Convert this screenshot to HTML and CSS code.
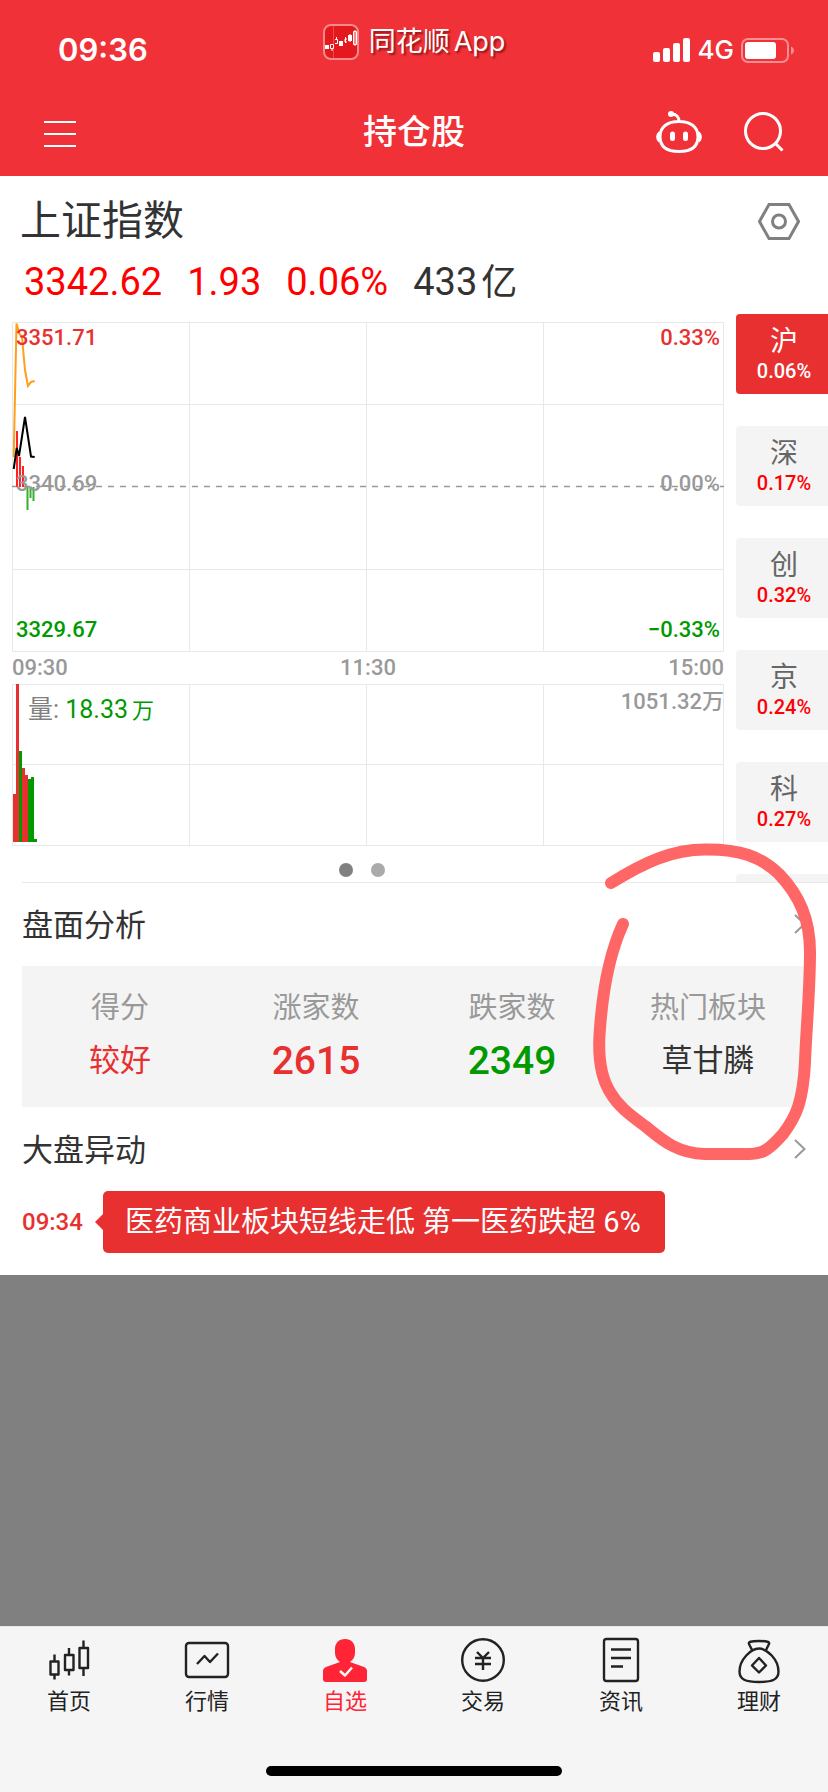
FILE: index.html
```html
<!DOCTYPE html>
<html lang="zh-CN">
  <head>
    <meta charset="UTF-8" />
    <meta name="viewport" content="width=device-width, initial-scale=1.0" />
    <title>持仓股</title>
    <link rel="stylesheet" href="styles.css">
  </head>
  <body>
    <header class="header">
      <div class="status-bar">
        <span class="time">09:36</span>
        <div class="brand">
          <svg class="brand-logo" width="36" height="36" viewBox="0 0 36 36">
            <rect x="1" y="1" width="34" height="34" rx="7" fill="#e4191e" stroke="#f58a8d" stroke-width="2" />
            <path d="M10.500 2v32" stroke="#ee4a4d" />
            <path d="M2 21h4v4H2zM16 17h4v5h-4zM25 11h4v6h-4z" fill="#fff" />
            <path d="M7.500 20.500h3v4h-3zM9 24v3M12 15.500h2.500v4H12M13.500 13v2M24 15h-2v3h2M22.500 13v6M27 10v8M30.500 7.500h3v13h-3zM32 6v16" fill="none" stroke="#fff" />
          </svg>
          <span class="brand-name">同花顺<span>App</span></span>
        </div>
        <div class="signals">
          <svg width="38" height="24" viewBox="0 0 38 24" fill="#fff">
            <rect x="0" y="14" width="7" height="10" rx="2" />
            <rect x="10" y="10" width="7" height="14" rx="2" />
            <rect x="20" y="5" width="7" height="19" rx="2" />
            <rect x="30" y="0" width="7" height="24" rx="2" />
          </svg>
          <span class="network">4G</span>
          <svg width="53" height="25" viewBox="0 0 53 25">
            <rect x="1" y="1" width="46" height="23" rx="6" fill="none" stroke="#f78e91" stroke-width="2" />
            <rect x="4" y="4" width="31" height="17" rx="3" fill="#fff" />
            <path d="M50 8.500c4 1.500 4 6.500 0 8z" fill="#f78e91" />
          </svg>
        </div>
      </div>
      <div class="title-bar">
        <button class="icon-btn" aria-label="菜单">
          <svg width="32" height="30" viewBox="0 0 32 30" fill="#fff">
            <path d="M0 4h32v2H0zM0 16h32v2H0zM0 28h32v2H0z" />
          </svg>
        </button>
        <h1>持仓股</h1>
        <div class="title-actions">
          <button class="icon-btn" aria-label="助手">
            <svg width="46" height="42" viewBox="0 0 46 42" fill="none" stroke="#fff" stroke-width="3">
              <path d="M23 10.500c11 0 19 5 19 15 0 9-5 15-19 15s-19-6-19-15c0-10 8-15 19-15zM23 10c0-4-3-7-7-7" />
              <circle cx="15" cy="3" r="3" fill="#fff" stroke="none" />
              <path d="M3 21c-3 1-3 9 0 10zM43 21c3 1 3 9 0 10z" fill="#fff" stroke-width="1" />
              <path d="M16.500 23v4.500M29.500 23v4.500" stroke-width="5" stroke-linecap="round" />
            </svg>
          </button>
          <button class="icon-btn" aria-label="搜索">
            <svg width="40" height="40" viewBox="0 0 40 40" fill="none" stroke="#fff" stroke-width="3">
              <circle cx="19" cy="19" r="17.500" />
              <path d="M31.500 31.500l7 7" />
            </svg>
          </button>
        </div>
      </div>
    </header>

    <main class="content">
      <section class="index">
        <div class="index-head">
          <h2>上证指数</h2>
          <button class="icon-btn" aria-label="设置">
            <svg width="42" height="37" viewBox="0 0 42 37" fill="none" stroke="#808080" stroke-width="3">
              <path d="M11 1.500h20l9.500 17-9.500 17H11l-9.500-17z" />
              <circle cx="21" cy="18.500" r="6.500" />
            </svg>
          </button>
        </div>
        <div class="quote">
          <span>3342.62</span>
          <span>1.93</span>
          <span>0.06%</span>
          <span class="amount">433<small>亿</small></span>
        </div>
      </section>

      <section class="market">
        <div class="charts">
          <div class="chart price">
            <svg viewBox="0 0 712 330" preserveAspectRatio="none">
              <path class="grid-line" d="M.5 .5h711v329H.5zM177.500 0v330M354.500 0v330M531.500 0v330M0 82.500h712M0 247.500h712" />
              <path d="M0 164.500h712" stroke="#999" stroke-width="1.500" stroke-dasharray="6 6" />
              <path d="M5 109v56M8 135v30M11 144v21" stroke="#f22" stroke-width="2" />
              <path d="M15.500 165v23M18.500 165v11M21.500 165v14" stroke="#35b02d" stroke-width="2" />
              <polyline points="1.700,135 4.500,1.500 7.500,12 10,15 13,48 16,64 19,60 22.700,59" fill="none" stroke="#ff9f1a" stroke-width="2" />
              <polyline points="1.700,147 4.700,126 7,134 13,95 19,134.500 22.700,135" fill="none" stroke="#000" stroke-width="2" />
            </svg>
            <div class="scale">
              <div class="scale-row up"><span>3351.71</span><span>0.33%</span></div>
              <div class="scale-row flat"><span>3340.69</span><span>0.00%</span></div>
              <div class="scale-row down"><span>3329.67</span><span>−0.33%</span></div>
            </div>
          </div>
          <div class="axis">
            <span>09:30</span>
            <span>11:30</span>
            <span>15:00</span>
          </div>
          <div class="chart volume">
            <svg viewBox="0 0 712 162" preserveAspectRatio="none">
              <path class="grid-line" d="M.5 .5h711v161H.5zM177.500 0v162M354.500 0v162M531.500 0v162M0 80.500h712" />
              <path d="M1 110h3v48H1zM4 0h3v158H4zM10 84h3v74h-3zM13 91h3v67h-3z" fill="#e83030" />
              <path d="M7 67h3v91H7zM16 95h3v63h-3zM19 93h3v65h-3zM22 155h3v3h-3z" fill="#090" />
            </svg>
            <div class="volume-labels">
              <span class="volume-now">量: <b>18.33<small>万</small></b></span>
              <span class="volume-max">1051.32万</span>
            </div>
          </div>
          <div class="dots">
            <span class="dot active"></span>
            <span class="dot"></span>
          </div>
        </div>
        <div class="tabs">
          <button class="tab active">沪<span>0.06%</span></button>
          <button class="tab">深<span>0.17%</span></button>
          <button class="tab">创<span>0.32%</span></button>
          <button class="tab">京<span>0.24%</span></button>
          <button class="tab">科<span>0.27%</span></button>
          <button class="tab" aria-label="更多"></button>
        </div>
      </section>

      <section class="analysis">
        <a class="section-title" href="#">
          <span>盘面分析</span>
          <svg width="12" height="20" viewBox="0 0 12 20"><path d="M1 1l9.500 9L1 19" /></svg>
        </a>
        <div class="summary">
          <div class="cell"><p>得分</p><strong class="up">较好</strong></div>
          <div class="cell"><p>涨家数</p><strong class="num up">2615</strong></div>
          <div class="cell"><p>跌家数</p><strong class="num down">2349</strong></div>
          <div class="cell"><p>热门板块</p><strong>草甘膦</strong></div>
        </div>
        <a class="section-title" href="#">
          <span>大盘异动</span>
          <svg width="12" height="20" viewBox="0 0 12 20"><path d="M1 1l9.500 9L1 19" /></svg>
        </a>
        <div class="event">
          <time>09:34</time>
          <a class="bubble" href="#">医药商业板块短线走低 第一医药跌超 6%</a>
        </div>
      </section>

      <!-- hand-drawn mark around the hot sector cell -->
      <svg class="mark" width="228" height="330" viewBox="600 840 228 330">
        <path d="M611 883C643 863 672 849 707 849.500C740 849.500 760 856 779 874C800 896 810 920 810 952C810 992 806 1032 805 1062C803 1102 796 1117 783 1134C769 1150 762 1154 750 1154H705C675 1153 660 1138 645 1126C629 1114 618 1106 610 1092C599 1074 598 1050 600 1028C603 988 610 952 623 924" />
      </svg>
    </main>

    <nav class="tab-bar">
      <div class="tab-items">
        <a class="tab-item" href="#">
          <svg width="48" height="48" viewBox="0 0 48 48">
            <path d="M5.500 25.500h8v13h-8zM9.500 18.500v7M9.500 38.500v5M20 19h8.500v15H20zM24 12v7M24 34v5.500M34.500 12H43v20h-8.500zM38.500 4.500V12M38.500 32v8" />
          </svg>
          首页
        </a>
        <a class="tab-item" href="#">
          <svg width="48" height="48" viewBox="0 0 48 48">
            <rect x="3" y="7" width="42" height="34" rx="3" />
            <path d="M14 28l7.500-8 5.500 6 8-8.500" />
          </svg>
          行情
        </a>
        <a class="tab-item active" href="#">
          <svg width="48" height="48" viewBox="0 0 48 48">
            <path d="M24 3c6 0 10 4 10 10v4c0 4-2 7-5 9l14 5c2 1 3 2 3 4v8c0 2-1 3-3 3H5c-2 0-3-1-3-3v-8c0-2 1-3 3-4l14-5c-3-2-5-5-5-9v-4c0-6 4-10 10-10z" fill="#ff2436" stroke="none" />
            <path d="M19 35l5 4.500 7-8" stroke="#fff" />
          </svg>
          自选
        </a>
        <a class="tab-item" href="#">
          <svg width="48" height="48" viewBox="0 0 48 48">
            <circle cx="24" cy="24" r="20.800" />
            <path d="M18 16l6 6 6-6M24 22v12M16 22h16M16 28h16" />
          </svg>
          交易
        </a>
        <a class="tab-item" href="#">
          <svg width="48" height="48" viewBox="0 0 48 48">
            <rect x="7" y="3" width="34" height="42" rx="2.500" />
            <path d="M14 13.500h20M14 22h20M14 30.500h12" />
          </svg>
          资讯
        </a>
        <a class="tab-item" href="#">
          <svg width="48" height="48" viewBox="0 0 48 48">
            <path d="M17 14l-3-6c-1-2 2-3 10-3s11 1 10 3l-3 6M24 12.500c8 0 19.500 11 19.500 23 0 8-6 10.500-19.500 10.500S4.500 43.500 4.500 35.500c0-12 11.500-23 19.500-23zM24 22l7 7.500-7 7-7-7z" />
          </svg>
          理财
        </a>
      </div>
      <div class="home-indicator"></div>
    </nav>
  </body>
</html>
```

FILE: styles.css
```css
* {
  box-sizing: border-box;
}

body {
  margin: 0;
  min-height: 100vh;
  display: flex;
  flex-direction: column;
  background-color: #808080;
  color: #333;
  font-family: Roboto, "Noto Sans CJK SC", sans-serif;
  overflow-x: hidden;
}

h1,
h2,
p {
  margin: 0;
  font-weight: 400;
}

a {
  color: inherit;
  text-decoration: none;
}

button {
  border: none;
  background: none;
  padding: 0;
  font-family: inherit;
  cursor: pointer;
}

svg {
  display: block;
}

.icon-btn {
  display: block;
}

.up {
  color: #e83030;
}

.down {
  color: #090;
}

.flat {
  color: #999;
}

/* Header */
.header {
  background-color: #f03238;
  color: #fff;
}

.status-bar,
.title-bar {
  display: grid;
  grid-template-columns: 1fr auto 1fr;
  align-items: center;
  height: 88px;
}

.status-bar {
  padding: 12px 34px 0;
}

.time {
  padding-left: 24px;
  font: 600 31px/40px Inter, sans-serif;
}

.brand {
  display: flex;
  align-items: center;
  align-self: start;
  gap: 10px;
  margin-top: 12px;
  height: 36px;
}

.brand-name {
  font: 400 27px/36px Inter, "Noto Sans CJK SC", sans-serif;
  text-shadow: 2px 2px 2px rgba(90, 0, 0, 0.6);
}

.brand-name span {
  margin-left: 4px;
}

.signals {
  display: flex;
  align-items: center;
  justify-content: flex-end;
  gap: 7px;
}

.network {
  font: 500 26px/32px Inter, sans-serif;
}

.title-bar {
  padding: 0 44px;
}

.title-bar h1 {
  font-size: 34px;
  line-height: 48px;
  font-weight: 500;
}

.title-actions {
  display: flex;
  align-items: center;
  justify-content: flex-end;
  gap: 42px;
}

/* Index quote */
.content {
  position: relative;
  background-color: #fff;
}

.index {
  padding: 16px 28px 0 20px;
}

.index-head {
  display: flex;
  align-items: center;
  justify-content: space-between;
  height: 58px;
}

.index-head h2 {
  font-size: 41px;
  line-height: 58px;
}

.quote {
  display: flex;
  align-items: center;
  gap: 25px;
  height: 64px;
  padding-left: 4px;
  color: #f00;
  font-size: 38px;
  line-height: 64px;
}

.quote .amount {
  color: #333;
}

.quote small {
  margin-left: 4px;
  font-size: 36px;
}

/* Charts */
.market {
  display: flex;
  gap: 12px;
  height: 568px;
  padding-left: 12px;
  overflow: hidden;
}

.charts {
  flex: 1;
  padding-top: 8px;
  font-size: 22px;
  font-weight: 500;
}

.chart {
  display: grid;
}

.chart > * {
  grid-area: 1 / 1;
}

.chart svg {
  width: 100%;
  height: 100%;
}

.price {
  height: 330px;
}

.volume {
  height: 162px;
}

.grid-line {
  fill: none;
  stroke: #e8e8e8;
}

.scale {
  display: flex;
  flex-direction: column;
  justify-content: space-between;
  padding: 0 4px 6px;
}

.scale-row {
  display: flex;
  justify-content: space-between;
  line-height: 32px;
}

.axis {
  display: flex;
  justify-content: space-between;
  color: #999;
  line-height: 32px;
}

.volume-labels {
  display: flex;
  justify-content: space-between;
  align-items: flex-start;
  padding-left: 16px;
  color: #999;
}

.volume-now {
  padding-top: 8px;
  color: #808080;
  font-size: 25px;
  font-weight: 400;
  line-height: 36px;
}

.volume-now b {
  color: #090;
  font-weight: 400;
}

.volume-now small {
  margin-left: 4px;
  font-size: 22px;
}

.volume-max {
  line-height: 36px;
}

.dots {
  display: flex;
  justify-content: center;
  gap: 18px;
  padding: 17px 12px 0 0;
}

.dot {
  width: 14px;
  height: 14px;
  border-radius: 50%;
  background-color: #aaa;
}

.dot.active {
  background-color: #808080;
}

/* Market tabs */
.tabs {
  display: flex;
  flex-direction: column;
  gap: 32px;
  width: 92px;
}

.tab {
  display: flex;
  flex-direction: column;
  flex: none;
  align-items: center;
  height: 80px;
  padding: 10px 0 0 4px;
  border-radius: 4px 0 0 4px;
  background-color: #f4f4f4;
  color: #666;
  font-size: 28px;
  line-height: 35px;
}

.tab span {
  color: #f00;
  font-size: 20px;
  font-weight: 500;
  line-height: 24px;
}

.tab.active {
  background-color: #e83030;
}

.tab.active,
.tab.active span {
  color: #fff;
}

/* Analysis */
.analysis {
  margin-left: 22px;
  padding: 0 22px 22px 0;
  position: relative;
}

.analysis::before {
  content: "";
  position: absolute;
  top: 0;
  left: 0;
  right: 0;
  height: 1px;
  background-color: #e8e8e8;
}

.section-title {
  display: flex;
  align-items: center;
  justify-content: space-between;
  height: 84px;
  font-size: 31px;
}

.section-title span {
  padding-bottom: 4px;
}

.section-title svg {
  fill: none;
  stroke: #999;
  stroke-width: 2;
}

.summary {
  display: grid;
  grid-template-columns: repeat(4, 1fr);
  padding: 22px 0 22px;
  background-color: #f4f4f4;
  text-align: center;
}

.cell p {
  color: #999;
  font-size: 29px;
  line-height: 40px;
  margin-bottom: 9px;
}

.cell strong {
  display: block;
  font-size: 31px;
  font-weight: 400;
  line-height: 48px;
}

.cell .num {
  font-size: 39px;
  font-weight: 500;
}

.event {
  display: flex;
  align-items: center;
  gap: 20px;
}

.event time {
  color: #e83030;
  font-size: 24px;
  font-weight: 500;
}

.bubble {
  position: relative;
  padding: 0 24px 0 22px;
  border-radius: 5px;
  background-color: #e83030;
  color: #fff;
  font-size: 29px;
  line-height: 62px;
}

.bubble::before {
  content: "";
  position: absolute;
  left: -8px;
  top: 23px;
  border: 8px solid transparent;
  border-left: none;
  border-right-color: #e83030;
}

.mark {
  position: absolute;
  right: 0;
  top: 664px;
  overflow: visible;
  pointer-events: none;
}

.mark path {
  fill: none;
  stroke: #ff6666;
  stroke-width: 12;
  stroke-linecap: round;
  stroke-linejoin: round;
}

/* Bottom tab bar */
.tab-bar {
  margin-top: auto;
  padding: 9px 0 16px;
  border-top: 1px solid #e8e8e8;
  background-color: #f5f5f5;
}

.tab-items {
  display: grid;
  grid-template-columns: repeat(6, 1fr);
}

.tab-item {
  display: flex;
  flex-direction: column;
  align-items: center;
  gap: 4px;
  color: #222;
  font-size: 22px;
  line-height: 28px;
}

.tab-item svg {
  fill: none;
  stroke: #222;
  stroke-width: 2.4;
  stroke-linejoin: round;
}

.tab-item.active {
  color: #ff2436;
}

.home-indicator {
  width: 296px;
  height: 10px;
  margin: 50px auto 0;
  border-radius: 5px;
  background-color: #000;
}
```
